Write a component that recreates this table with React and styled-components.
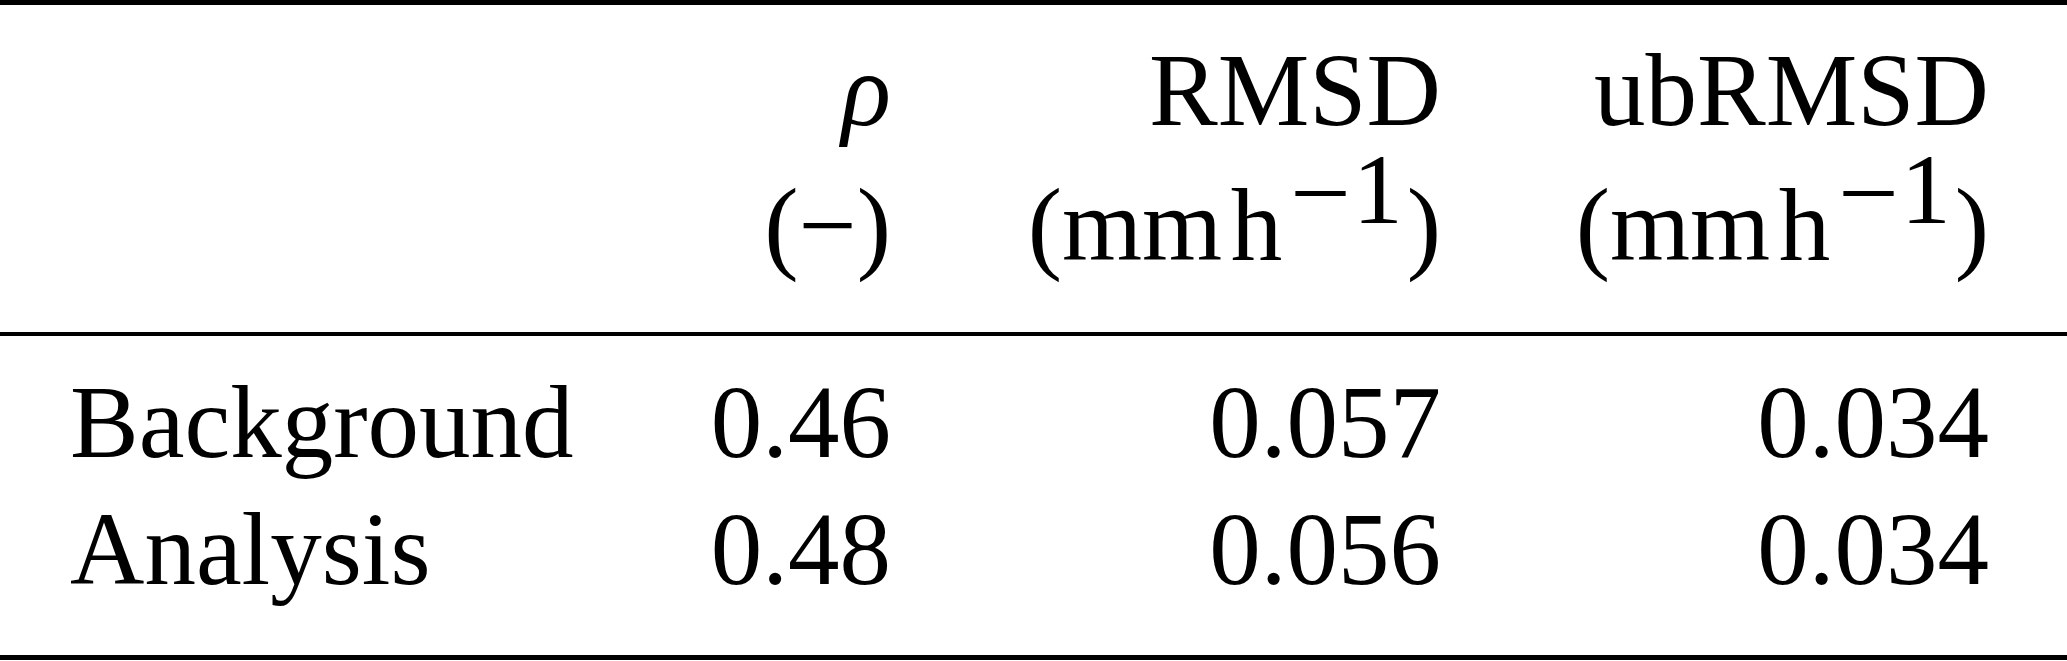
import React from "react";
import styled, { createGlobalStyle } from "styled-components";

const GlobalStyle = createGlobalStyle`
	html, body {
		margin: 0;
		padding: 0;
		background: #fff;
	}

	body {
		font-family: "Liberation Serif", "Times New Roman", serif;
		color: #000;
	}
`;

const StyledTable = styled.div`
	width: 2067px;
	font-size: 103px;
`;

const Rule = styled.div`
	height: ${(p) => p.$weight}px;
	background-color: #000;
`;

const Section = styled.div`
	display: grid;
	grid-template-columns: 529px 292px 550px 548px;
	padding: ${(p) => p.$top}px 77px ${(p) => p.$bottom}px 70px;
	line-height: ${(p) => p.$lineHeight}px;
`;

const Cell = styled.div`
	white-space: nowrap;
	text-align: ${(p) => (p.$left ? "left" : "right")};
`;

const Symbol = styled.i`
	font-style: italic;
`;

// superscript "−1", raised by hand so the line box keeps its height
const Sup = styled.span`
	position: relative;
	top: -37px;
	font-size: 100px;
	line-height: 0;
	margin-left: 8px;
	margin-right: 4px;
`;

const SupMinus = styled.span`
	display: inline-block;
	transform: translateY(4px) scaleX(1.08);
	transform-origin: left center;
	margin-right: 6px;
`;

const Unit = () => (
	<>
		(mm&#8202;h
		<Sup>
			<SupMinus>−</SupMinus>1
		</Sup>
		)
	</>
);

const rows = [
	{ name: "Background", rho: "0.46", rmsd: "0.057", ub: "0.034" },
	{ name: "Analysis", rho: "0.48", rmsd: "0.056", ub: "0.034" },
];

function App() {
	return (
		<>
			<GlobalStyle />
			<StyledTable>
				<Rule $weight={5} />
				<Section $top={18} $bottom={39} $lineHeight={135}>
					<Cell $left />
					<Cell>
						<Symbol>ρ</Symbol>
					</Cell>
					<Cell>RMSD</Cell>
					<Cell>ubRMSD</Cell>
					<Cell $left />
					<Cell>(−)</Cell>
					<Cell>
						<Unit />
					</Cell>
					<Cell>
						<Unit />
					</Cell>
				</Section>
				<Rule $weight={4} />
				<Section $top={23} $bottom={42} $lineHeight={127}>
					{rows.map((row) => (
						<React.Fragment key={row.name}>
							<Cell $left>{row.name}</Cell>
							<Cell>{row.rho}</Cell>
							<Cell>{row.rmsd}</Cell>
							<Cell>{row.ub}</Cell>
						</React.Fragment>
					))}
				</Section>
				<Rule $weight={5} />
			</StyledTable>
		</>
	);
}

export default App;
